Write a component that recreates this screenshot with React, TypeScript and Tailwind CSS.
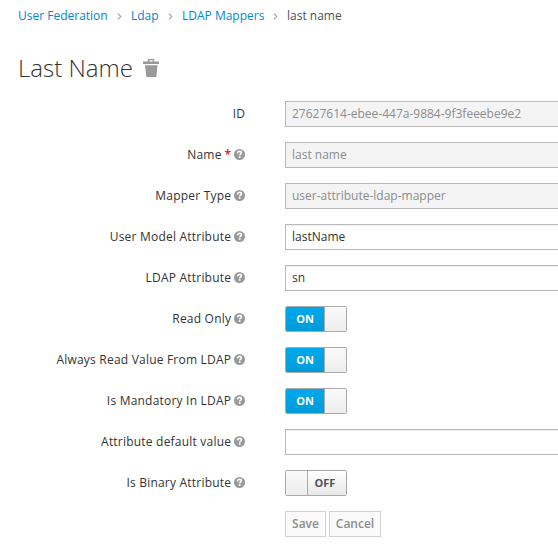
import type { ReactNode } from "react";

function Help() {
  return (
    <svg viewBox="0 0 12 12" className="mb-px ml-[3px] h-[11px] w-[11px] shrink-0">
      <circle cx="6" cy="6" r="6" fill="#999" />
      <path d="M3.8 4.7C4 3.2 4.9 2.6 6 2.6c1.2 0 2.1.8 2.1 1.8C8.1 5.7 6.2 5.7 6.2 7.1" fill="none" stroke="#fff" strokeWidth="1.7" />
      <rect x="5.3" y="7.8" width="1.8" height="1.8" fill="#fff" />
    </svg>
  );
}

function Row({ label, required, help = true, children }: { label: string; required?: boolean; help?: boolean; children: ReactNode }) {
  return (
    <div className="flex h-[26px] items-center">
      <div className="flex w-[245px] shrink-0 items-center justify-end font-medium whitespace-nowrap">
        <span className="-mr-[0.2px] tracking-[0.21px]">{label}</span>
        {required && <span className="ml-[3px] font-semibold text-[#f00]">*</span>}
        {help && <Help />}
      </div>
      <div className="ml-10 h-[26px] flex-1">{children}</div>
    </div>
  );
}

function Field({ value = "", disabled }: { value?: string; disabled?: boolean }) {
  return (
    <input
      readOnly
      disabled={disabled}
      value={value}
      className="block h-[26px] w-[300px] border border-[#bababa] bg-white px-1.5 pb-0.5 text-[#333] shadow-[inset_0_1px_1px_rgba(0,0,0,0.075)] outline-none disabled:bg-[#f4f4f4] disabled:text-[#8b8d8f] disabled:shadow-none"
    />
  );
}

function Toggle({ on }: { on?: boolean }) {
  return (
    <div className="flex h-[26px] w-[62px] overflow-hidden rounded-[2px] border border-[#aaa] text-[11px] leading-6 font-bold">
      {on ? (
        <>
          <div className="w-[38px] bg-linear-to-b from-[#00a9ec] to-[#009bd8] text-center text-white">ON</div>
          <div className="flex-1 border-l border-[#aaa] bg-linear-to-b from-[#fafafa] to-[#ededed]" />
        </>
      ) : (
        <>
          <div className="w-[22px] border-r border-[#aaa] bg-linear-to-b from-[#fafafa] to-[#ededed]" />
          <div className="flex-1 bg-linear-to-b from-white to-[#e8e8e8] pr-1 text-center text-[#4d5258]">OFF</div>
        </>
      )}
    </div>
  );
}

function Chevron() {
  return (
    <svg viewBox="0 0 5 8" className="mt-px h-[7px] w-[5px] shrink-0" fill="none" stroke="#9c9c9c" strokeWidth="1.2">
      <path d="M.7.7 4 4 .7 7.3" />
    </svg>
  );
}

export default function App() {
  return (
    <div className="h-[555px] w-[558px] overflow-hidden bg-white font-['Open_Sans',sans-serif] text-[12px] text-[#333]">
      <nav className="flex h-8 items-center pl-[18px] whitespace-nowrap text-[#0088ce]">
        <span className="w-[99px]">User Federation</span>
        <Chevron />
        <span className="ml-[9px] w-[37px]">Ldap</span>
        <Chevron />
        <span className="ml-[9px] w-[91px]">LDAP Mappers</span>
        <Chevron />
        <span className="ml-[9px] text-[#4d5258]">last name</span>
      </nav>
      <h1 className="mt-[18px] flex h-9 items-center pl-[18px] text-[24px] font-light whitespace-nowrap">
        <span className="w-[125px]">Last Name</span>
        <svg viewBox="0 0 16 18" className="h-[18px] w-4" fill="#999">
          <path d="M0 2.5h4.8V.5Q4.8 0 5.3 0h5.4q.5 0 .5.5v2H16V5H0zM6.3 1.2v1.3h3.4V1.2zM2 6.2h12.5L13.3 18h-10z" />
        </svg>
      </h1>
      <form className="mt-[15px] flex flex-col gap-[15px]">
        <Row label="ID" help={false}><Field disabled value="27627614-ebee-447a-9884-9f3feeebe9e2" /></Row>
        <Row label="Name" required><Field disabled value="last name" /></Row>
        <Row label="Mapper Type"><Field disabled value="user-attribute-ldap-mapper" /></Row>
        <Row label="User Model Attribute"><Field value="lastName" /></Row>
        <Row label="LDAP Attribute"><Field value="sn" /></Row>
        <Row label="Read Only"><Toggle on /></Row>
        <Row label="Always Read Value From LDAP"><Toggle on /></Row>
        <Row label="Is Mandatory In LDAP"><Toggle on /></Row>
        <Row label="Attribute default value"><Field /></Row>
        <Row label="Is Binary Attribute"><Toggle /></Row>
        <div className="ml-[285px] flex gap-[3px] font-semibold text-[#8b8d8f]">
          <button type="button" disabled className="h-[26px] w-[41px] border border-[#d1d1d1] bg-[#fafafa]">Save</button>
          <button type="button" disabled className="h-[26px] w-[52px] border border-[#d1d1d1] bg-[#fafafa]">Cancel</button>
        </div>
      </form>
    </div>
  );
}
